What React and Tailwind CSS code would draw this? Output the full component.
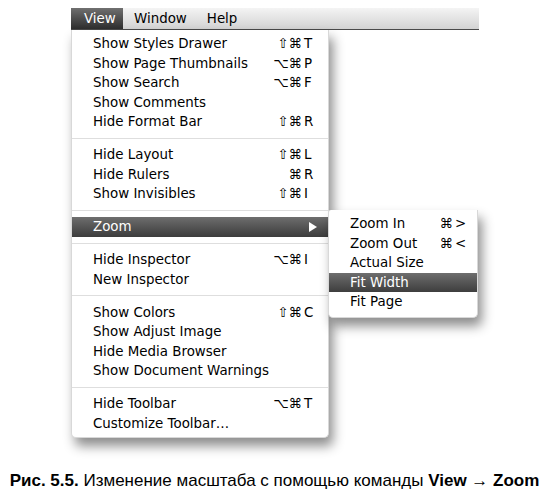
import React from "react"

const mainMenu = [
  [
    { label: "Show Styles Drawer", mods: "⇧⌘", key: "T" },
    { label: "Show Page Thumbnails", mods: "⌥⌘", key: "P" },
    { label: "Show Search", mods: "⌥⌘", key: "F" },
    { label: "Show Comments" },
    { label: "Hide Format Bar", mods: "⇧⌘", key: "R" },
  ],
  [
    { label: "Hide Layout", mods: "⇧⌘", key: "L" },
    { label: "Hide Rulers", mods: "⌘", key: "R" },
    { label: "Show Invisibles", mods: "⇧⌘", key: "I" },
  ],
  [{ label: "Zoom", submenu: true }],
  [
    { label: "Hide Inspector", mods: "⌥⌘", key: "I" },
    { label: "New Inspector" },
  ],
  [
    { label: "Show Colors", mods: "⇧⌘", key: "C" },
    { label: "Show Adjust Image" },
    { label: "Hide Media Browser" },
    { label: "Show Document Warnings" },
  ],
  [
    { label: "Hide Toolbar", mods: "⌥⌘", key: "T" },
    { label: "Customize Toolbar…" },
  ],
]

const zoomMenu = [
  { label: "Zoom In", mods: "⌘", key: ">" },
  { label: "Zoom Out", mods: "⌘", key: "<" },
  { label: "Actual Size" },
  { label: "Fit Width", active: true },
  { label: "Fit Page" },
]

function Shortcut({ mods, keyName }) {
  if (!keyName) return null
  return (
    <span className="flex items-center">
      <span className="text-right">{mods}</span>
      <span className="w-[16px] pl-[2px] text-left">{keyName}</span>
    </span>
  )
}

function SubMenu() {
  return (
    <div className="absolute left-full top-[-7px] w-[150px] bg-white rounded-b-[5px] rounded-tl-[3px] pt-[4px] pb-[5px] shadow-[4px_8px_12px_rgba(0,0,0,0.45)] border border-[#d8d8d8] border-t-0">
      {zoomMenu.map((item) => (
        <div
          key={item.label}
          className={
            "h-[19.5px] flex items-center pl-[21px] pr-[8px] " +
            (item.active ? "bg-gradient-to-b from-[#6e6e6e] to-[#3e3e3e] text-white" : "text-black")
          }
        >
          <span className="flex-1">{item.label}</span>
          <Shortcut mods={item.mods} keyName={item.key} />
        </div>
      ))}
    </div>
  )
}

export default function App() {
  return (
    <div
      className="w-[549px] h-[495px] bg-white flex flex-col pt-[8px] text-[13.4px] leading-none"
      style={{ fontFamily: '"DejaVu Sans", "Lucida Grande", sans-serif' }}
    >
      {/* menu bar */}
      <div className="ml-[71px] w-[408px] h-[22px] flex items-center bg-gradient-to-b from-[#f4f4f4] to-[#d3d3d3] border-b border-[#4a4a4a] text-black">
        <div className="h-full w-[52px] pl-[13px] flex items-center bg-gradient-to-b from-[#707070] to-[#2e2e2e] text-white">
          View
        </div>
        <span className="ml-[11px]">Window</span>
        <span className="ml-[20px]">Help</span>
      </div>

      {/* View menu */}
      <div className="ml-[71px] w-[258px] bg-white rounded-b-[5px] pt-[4px] pb-[4px] shadow-[4px_8px_12px_rgba(0,0,0,0.45)] border-x border-b border-[#d8d8d8]">
        {mainMenu.map((group, gi) => (
          <div key={gi}>
            {gi > 0 && (
              <div className="h-[13.5px] flex items-center">
                <div className="w-full h-px bg-[#dedede]" />
              </div>
            )}
            {group.map((item) =>
              item.submenu ? (
                <div key={item.label} className="relative h-[19.5px] flex items-center pl-[21px] pr-[11px] bg-gradient-to-b from-[#6e6e6e] to-[#3c3c3c] text-white">
                  <span className="flex-1">{item.label}</span>
                  <svg width="8" height="10" viewBox="0 0 8 10">
                    <polygon points="0,0 8,5 0,10" fill="#fff" />
                  </svg>
                  <SubMenu />
                </div>
              ) : (
                <div key={item.label} className="h-[19.5px] flex items-center pl-[21px] pr-[10px] text-black">
                  <span className="flex-1">{item.label}</span>
                  <Shortcut mods={item.mods} keyName={item.key} />
                </div>
              )
            )}
          </div>
        ))}
      </div>

      {/* caption */}
      <p
        className="mt-[33px] text-center text-[17px] text-black leading-[20px]"
        style={{ fontFamily: '"Liberation Sans", Arial, sans-serif' }}
      >
        <b>Рис. 5.5.</b> Изменение масштаба с помощью команды <b>View</b> → <b>Zoom</b>
      </p>
    </div>
  )
}
